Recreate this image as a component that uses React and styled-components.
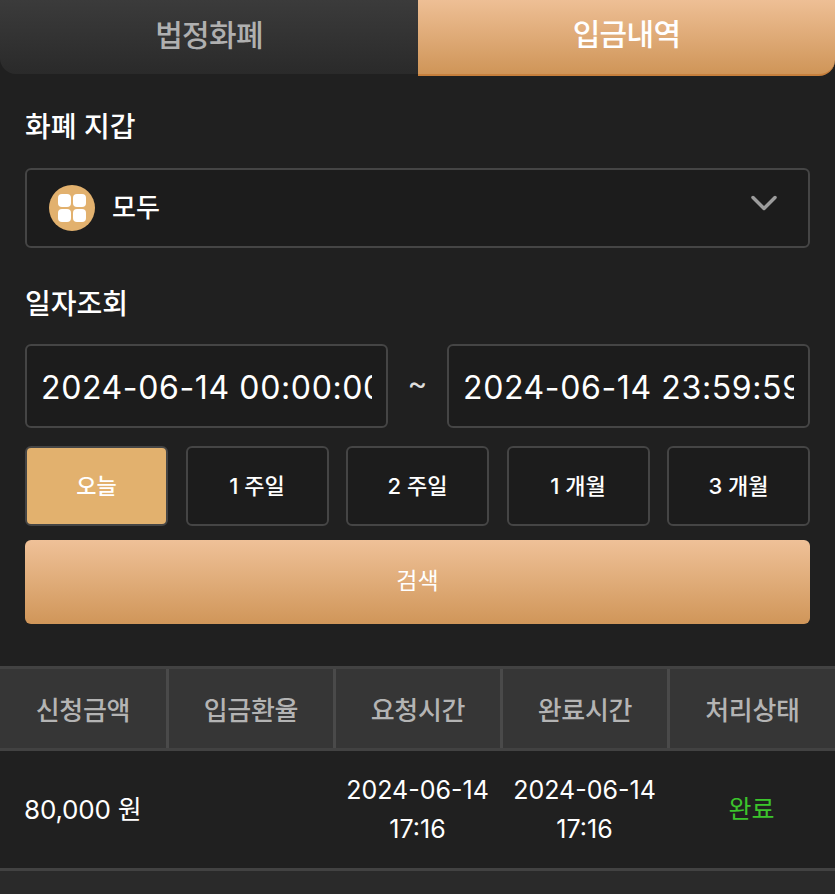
import React from "react";
import styled, { createGlobalStyle } from "styled-components";
import { ChevronDown } from "lucide-react";

const Global = createGlobalStyle`
  html, body { margin: 0; padding: 0; background: #202020; }
  body { font-family: "Inter", "Noto Sans CJK KR", sans-serif; color: #fff; }
  * { box-sizing: border-box; }
`;
const Page = styled.div`
  width: 835px; height: 894px; overflow: hidden; background: #202020;
  display: flex; flex-direction: column;
`;
const Tabs = styled.div`display: flex; height: 76px;`;
const Tab = styled.div`
  width: ${p => p.$w}px;
  height: ${p => (p.$active ? 76 : 74)}px;
  display: flex; align-items: center; justify-content: center;
  padding-bottom: ${p => (p.$active ? 10 : 9)}px;
  font-size: 30px; font-weight: 500; letter-spacing: -0.7px;
  color: ${p => (p.$active ? "#fff" : "#b0b0b0")};
  background: ${p => p.$active
    ? "linear-gradient(180deg,#eebf95 0%,#cf9558 100%)"
    : "linear-gradient(180deg,#3b3b3b 0%,#2a2a2a 100%)"};
  border-bottom: ${p => (p.$active ? "2px solid #c67f3c" : "none")};
  border-radius: ${p => (p.$active ? "0 0 16px 0" : "0 0 0 16px")};
`;
const Form = styled.div`display: flex; flex-direction: column; padding: 0 25px 0 25px;`;
const Label = styled.div`
  font-size: 28px; font-weight: 500; line-height: 40px;
  margin-top: ${p => p.$top}px; margin-bottom: ${p => p.$bottom}px;
`;
const Select = styled.div`
  height: 80px; display: flex; align-items: center; justify-content: space-between;
  padding: 0 22px 0 22px; background: #1c1c1c;
  border: 2px solid #454545; border-radius: 6px;
`;
const Chosen = styled.div`
  display: flex; align-items: center; gap: 17px; font-size: 26px; font-weight: 500;
  padding-bottom: 1px; line-height: 46px;
`;
const Coin = styled.div`
  width: 46px; height: 46px; border-radius: 50%; background: #e2b16e;
  display: grid; grid-template-columns: 13px 13px; grid-auto-rows: 13px; gap: 2px;
  align-content: center; justify-content: center;
`;
const Dot = styled.span`background: #fff; border-radius: 4px;`;
const Chevron = styled(ChevronDown)`color: #9c9c9c; margin-top: -10px;`;
const DateRow = styled.div`display: flex; align-items: center; height: 84px;`;
const DateBox = styled.div`
  width: 363px; height: 84px; padding: 3px 14px 0 14px; display: flex; align-items: center;
  background: #1c1c1c; border: 2px solid #454545; border-radius: 6px;
`;
const DateText = styled.div`
  font-size: 32px; line-height: 40px; white-space: nowrap; overflow: hidden; width: 100%;
  letter-spacing: 0.62px;
`;
const Tilde = styled.div`flex: 1; text-align: center; font-size: 30px; line-height: 40px; color: #ddd; padding-bottom: 6px;`;
const Ranges = styled.div`display: flex; justify-content: space-between; margin-top: 18px;`;
const Range = styled.div`
  width: 143px; height: 80px; display: flex; align-items: center; justify-content: center;
  font-size: 22px; font-weight: 500; padding-bottom: 4px;
  background: ${p => (p.$active ? "#e2b16e" : "#1c1c1c")};
  border: 2px solid #454545; border-radius: 6px;
`;
const Search = styled.div`
  height: 84px; margin-top: 14px; border-radius: 6px;
  display: flex; align-items: center; justify-content: center; padding-bottom: 6px;
  font-size: 23px; color: #fff;
  background: linear-gradient(180deg,#efc198 0%,#d09659 100%);
`;
const Table = styled.div`margin-top: 42px; border-top: 3px solid #424242;`;
const Head = styled.div`
  display: grid; grid-template-columns: 169px 167px 167px 167px 165px; height: 82px;
  background: #363636; border-bottom: 3px solid #424242;
`;
const HeadCell = styled.div`
  display: flex; align-items: center; justify-content: center;
  font-size: 26px; font-weight: 500; color: #b4b4b4; letter-spacing: -0.3px;
  padding-bottom: 1px;
  border-right: ${p => (p.$last ? "none" : "3px solid #4a4a4a")};
`;
const Row = styled.div`
  display: grid; grid-template-columns: repeat(5, 167px); height: 120px;
  background: #202020; border-bottom: 3px solid #424242;
`;
const Cell = styled.div`
  display: flex; align-items: center; justify-content: center; text-align: center;
  font-size: 25px; line-height: 39px; color: ${p => p.$color || "#fff"};
`;
const Amount = styled(Cell)`
  justify-content: flex-start; padding-left: 24px; font-size: 26px; white-space: nowrap;
  letter-spacing: -0.2px;
`;
const Rest = styled.div`flex: 1; background: #2a2a2a;`;

export default function App() {
  return (
    <Page>
      <Global />
      <Tabs>
        <Tab $w={418}>법정화폐</Tab>
        <Tab $w={417} $active>입금내역</Tab>
      </Tabs>
      <Form>
        <Label $top={31} $bottom={21}>화폐 지갑</Label>
        <Select>
          <Chosen>
            <Coin><Dot /><Dot /><Dot /><Dot /></Coin>
            모두
          </Chosen>
          <Chevron size={44} strokeWidth={1.9} />
        </Select>
        <Label $top={36} $bottom={20}>일자조회</Label>
        <DateRow>
          <DateBox><DateText>2024-06-14 00:00:00</DateText></DateBox>
          <Tilde>~</Tilde>
          <DateBox><DateText>2024-06-14 23:59:59</DateText></DateBox>
        </DateRow>
        <Ranges>
          <Range $active>오늘</Range>
          <Range>1 주일</Range>
          <Range>2 주일</Range>
          <Range>1 개월</Range>
          <Range>3 개월</Range>
        </Ranges>
        <Search>검색</Search>
      </Form>
      <Table>
        <Head>
          <HeadCell>신청금액</HeadCell>
          <HeadCell>입금환율</HeadCell>
          <HeadCell>요청시간</HeadCell>
          <HeadCell>완료시간</HeadCell>
          <HeadCell $last>처리상태</HeadCell>
        </Head>
        <Row>
          <Amount>80,000 원</Amount>
          <Cell></Cell>
          <Cell>2024-06-14<br />17:16</Cell>
          <Cell>2024-06-14<br />17:16</Cell>
          <Cell $color="#3cc42c">완료</Cell>
        </Row>
      </Table>
      <Rest />
    </Page>
  );
}
